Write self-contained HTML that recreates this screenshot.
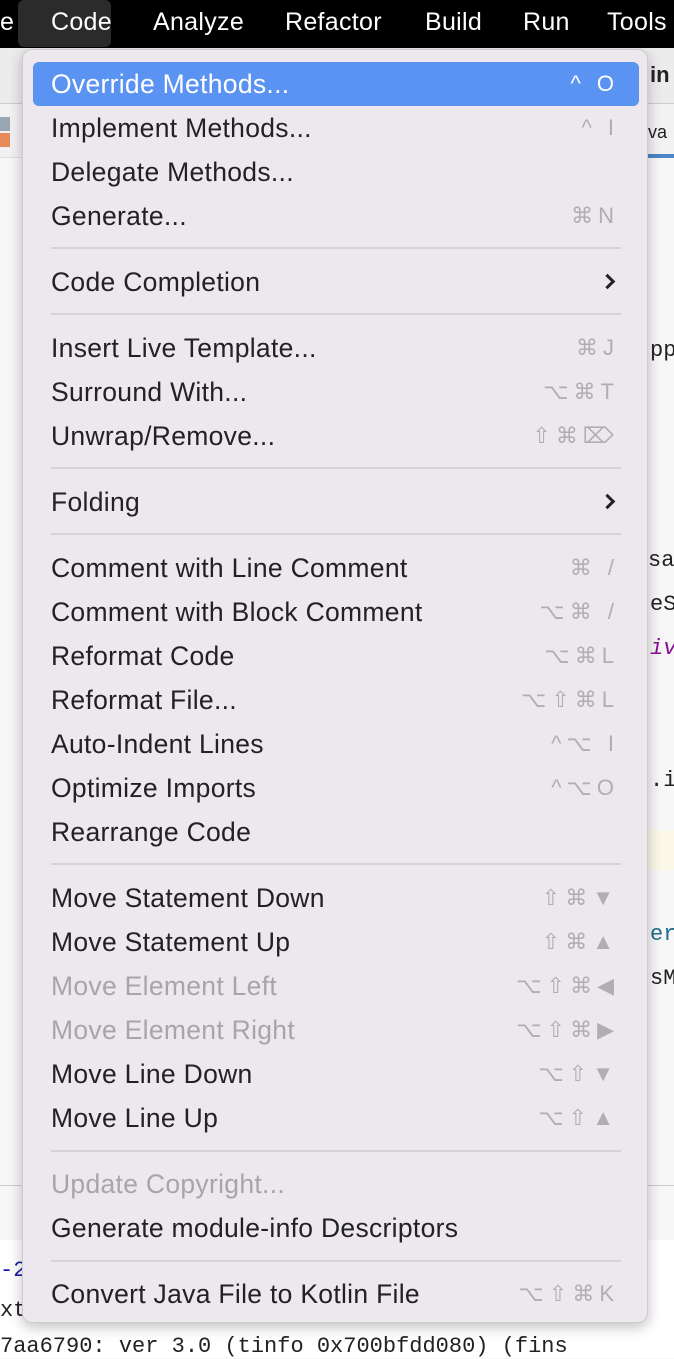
<!DOCTYPE html>
<html><head><meta charset="utf-8"><style>
*{margin:0;padding:0;box-sizing:border-box}
body{width:674px;height:1358px;overflow:hidden;background:#f7f7f7;font-family:"Liberation Sans","DejaVu Sans",sans-serif;position:relative}
.bar{position:absolute;left:0;top:0;width:674px;height:48px;background:#000;color:#fff;font-size:25px;letter-spacing:0.3px}
.bar span{position:absolute;top:8px}
.hl{position:absolute;left:18px;top:0;width:93px;height:47px;background:#2b2b2b;border-radius:6px}
.ed{position:absolute;font-family:"Liberation Mono",monospace;font-size:22px;color:#222}
.menu{position:absolute;left:22px;top:49px;width:626px;height:1274px;background:#ece8ee;border-radius:10px;border:1px solid #cfcbd1;box-shadow:0 4px 14px rgba(0,0,0,.25)}
.it{position:absolute;left:10px;width:606px;height:44px;font-size:26.5px;letter-spacing:0.3px;color:#222;line-height:44px;padding-left:18px}
.it.sel{background:#5b93f2;color:#fff;border-radius:6px}
.it.dis{color:#a8a5aa}
.sc{position:absolute;right:20px;top:0;color:#b0adb3;font-size:22px;letter-spacing:5px}
.sel .sc{color:#fff}
.arr{position:absolute;right:26px;top:16px;width:11px;height:11px;border-right:3px solid #222;border-top:3px solid #222;transform:rotate(45deg)}
.sep{position:absolute;left:28px;width:570px;height:2px;background:#d6d2d8}
</style></head><body>
<div class="bar"><div class="hl"></div>
<span style="left:0">e</span><span style="left:51px">Code</span><span style="left:153px">Analyze</span><span style="left:285px">Refactor</span><span style="left:425px">Build</span><span style="left:523px">Run</span><span style="left:607px">Tools</span></div>
<div style="position:absolute;left:0;top:48px;width:674px;height:56px;background:#ececec;border-bottom:1px solid #ccc"></div>
<div style="position:absolute;left:0;top:104px;width:674px;height:54px;background:#f2f2f2;border-bottom:1px solid #ddd"></div>
<div style="position:absolute;left:648px;top:154px;width:26px;height:4px;background:#4a86c8"></div>
<div style="position:absolute;left:0;top:117px;width:10px;height:14px;background:#9aa6b0"></div>
<div style="position:absolute;left:0;top:133px;width:10px;height:14px;background:#e88a5a"></div>
<div style="position:absolute;left:648px;top:830px;width:26px;height:40px;background:#fbf8e8"></div>
<div style="position:absolute;left:0;top:1185px;width:674px;height:1px;background:#ccc"></div>
<div style="position:absolute;left:0;top:1240px;width:674px;height:1px;background:#ccc"></div>
<div style="position:absolute;left:0;top:1240px;width:674px;height:118px;background:#fff"></div>
<div class="ed" style="left:650px;top:62px;font-family:'Liberation Sans';font-weight:bold">in</div>
<div class="ed" style="left:648px;top:122px;font-family:'Liberation Sans';font-size:18px">va</div>
<div class="ed" style="left:650px;top:338px">pp</div>
<div class="ed" style="left:648px;top:548px">sa</div>
<div class="ed" style="left:650px;top:592px">eS</div>
<div class="ed" style="left:650px;top:636px;color:#871094;font-style:italic">iv</div>
<div class="ed" style="left:650px;top:768px">.i</div>
<div class="ed" style="left:650px;top:922px;color:#1f6d8c">er</div>
<div class="ed" style="left:650px;top:966px">sM</div>
<div class="ed" style="left:0;top:1258px;color:#1a1aa6">-2</div>
<div class="ed" style="left:0;top:1298px">xt</div>
<div class="ed" style="left:0;top:1334px">7aa6790: ver 3.0 (tinfo 0x700bfdd080) (fins</div>
<div class="menu">
<div class="it sel" style="top:12px">Override Methods...<span class="sc">^ O</span></div>
<div class="it" style="top:56px">Implement Methods...<span class="sc">^ I</span></div>
<div class="it" style="top:100px">Delegate Methods...</div>
<div class="it" style="top:144px">Generate...<span class="sc">⌘N</span></div>
<div class="sep" style="top:197px"></div>
<div class="it" style="top:210px">Code Completion<span class="arr"></span></div>
<div class="sep" style="top:263px"></div>
<div class="it" style="top:276px">Insert Live Template...<span class="sc">⌘J</span></div>
<div class="it" style="top:320px">Surround With...<span class="sc">⌥⌘T</span></div>
<div class="it" style="top:364px">Unwrap/Remove...<span class="sc">⇧⌘⌦</span></div>
<div class="sep" style="top:417px"></div>
<div class="it" style="top:430px">Folding<span class="arr"></span></div>
<div class="sep" style="top:483px"></div>
<div class="it" style="top:496px">Comment with Line Comment<span class="sc">⌘ /</span></div>
<div class="it" style="top:540px">Comment with Block Comment<span class="sc">⌥⌘ /</span></div>
<div class="it" style="top:584px">Reformat Code<span class="sc">⌥⌘L</span></div>
<div class="it" style="top:628px">Reformat File...<span class="sc">⌥⇧⌘L</span></div>
<div class="it" style="top:672px">Auto-Indent Lines<span class="sc">^⌥ I</span></div>
<div class="it" style="top:716px">Optimize Imports<span class="sc">^⌥O</span></div>
<div class="it" style="top:760px">Rearrange Code</div>
<div class="sep" style="top:813px"></div>
<div class="it" style="top:826px">Move Statement Down<span class="sc">⇧⌘▼</span></div>
<div class="it" style="top:870px">Move Statement Up<span class="sc">⇧⌘▲</span></div>
<div class="it dis" style="top:914px">Move Element Left<span class="sc">⌥⇧⌘◀</span></div>
<div class="it dis" style="top:958px">Move Element Right<span class="sc">⌥⇧⌘▶</span></div>
<div class="it" style="top:1002px">Move Line Down<span class="sc">⌥⇧▼</span></div>
<div class="it" style="top:1046px">Move Line Up<span class="sc">⌥⇧▲</span></div>
<div class="sep" style="top:1100px"></div>
<div class="it dis" style="top:1112px">Update Copyright...</div>
<div class="it" style="top:1156px">Generate module-info Descriptors</div>
<div class="sep" style="top:1210px"></div>
<div class="it" style="top:1222px">Convert Java File to Kotlin File<span class="sc">⌥⇧⌘K</span></div>
</div>
</body></html>
